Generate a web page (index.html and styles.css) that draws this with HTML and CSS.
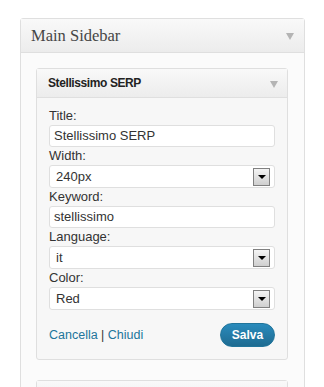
FILE: index.html
```html
<!DOCTYPE html>
<html lang="en">
<head>
    <meta charset="UTF-8">
    <title>Main Sidebar</title>
    <link rel="stylesheet" href="styles.css">
</head>
<body>
    <div class="sidebar">
        <div class="sidebar-head">
            <h3 class="sidebar-title">Main Sidebar</h3>
            <span class="toggle"></span>
        </div>
        <div class="sidebar-body">
            <div class="widget">
                <div class="widget-head">
                    <h4 class="widget-title">Stellissimo SERP</h4>
                    <span class="toggle"></span>
                </div>
                <div class="widget-body">
                    <label class="field-label">Title:</label>
                    <div class="text-input">Stellissimo SERP</div>

                    <label class="field-label">Width:</label>
                    <div class="select-input"><span class="select-value">240px</span><span class="select-btn"></span></div>

                    <label class="field-label">Keyword:</label>
                    <div class="text-input">stellissimo</div>

                    <label class="field-label">Language:</label>
                    <div class="select-input"><span class="select-value">it</span><span class="select-btn"></span></div>

                    <label class="field-label">Color:</label>
                    <div class="select-input"><span class="select-value">Red</span><span class="select-btn"></span></div>

                    <div class="widget-actions">
                        <div class="links"><a href="#">Cancella</a> | <a href="#">Chiudi</a></div>
                        <button class="save-button">Salva</button>
                    </div>
                </div>
            </div>
            <div class="widget widget-next">
                <div class="widget-head"></div>
            </div>
        </div>
    </div>
</body>
</html>
```

FILE: styles.css
```css
* {
    margin: 0;
    padding: 0;
    box-sizing: border-box;
}

body {
    background: #ffffff;
    font-family: 'Liberation Sans', Arial, sans-serif;
    font-size: 12px;
    color: #333333;
    padding: 18px 0 0 20px;
    height: 387px;
    overflow: hidden;
}

.sidebar {
    width: 285px;
    border: 1px solid #dfdfdf;
    border-radius: 3px 3px 0 0;
    background: #fbfbfb;
    min-height: 400px;
}

.sidebar-head {
    height: 34px;
    display: flex;
    align-items: center;
    justify-content: space-between;
    padding: 0 10px;
    background: linear-gradient(#f9f9f9, #ececec);
    border-bottom: 1px solid #dfdfdf;
}

.sidebar-title {
    font-family: 'Liberation Serif', Georgia, serif;
    font-weight: normal;
    font-size: 16.5px;
    color: #464646;
    padding-top: 1px;
}

.toggle {
    width: 0;
    height: 0;
    border-left: 4px solid transparent;
    border-right: 4px solid transparent;
    border-top: 7px solid #b4b4b4;
    margin-top: 2px;
}

.sidebar-body {
    padding: 15px 16px 0 15px;
}

.widget {
    border: 1px solid #dfdfdf;
    border-radius: 3px;
    background: #f7f7f7;
}

.widget-head {
    height: 29px;
    display: flex;
    align-items: center;
    justify-content: space-between;
    padding: 0 9px 0 11px;
    background: linear-gradient(#f9f9f9, #ececec);
    border-bottom: 1px solid #dfdfdf;
}

.widget-title {
    font-size: 12px;
    font-weight: bold;
    letter-spacing: -0.4px;
    color: #222222;
}

.widget-body {
    padding: 9px 12px 12px 12px;
}

.field-label {
    display: block;
    line-height: 18px;
    font-size: 13px;
    color: #333333;
}

.text-input,
.select-input {
    width: 226px;
    background: #ffffff;
    border: 1px solid #dfdfdf;
    border-radius: 3px;
    font-size: 13px;
    color: #333333;
}

.text-input {
    height: 22px;
    line-height: 20px;
    padding-left: 4px;
}

.select-input {
    height: 23px;
    display: flex;
    align-items: center;
    justify-content: space-between;
    padding: 0 2px 0 6px;
}

.select-btn {
    width: 17px;
    height: 18px;
    border: 1px solid #808080;
    background: linear-gradient(#f4f4f4, #cfcfcf);
    display: flex;
    align-items: center;
    justify-content: center;
    margin-right: 2px;
}

.select-btn::after {
    content: "";
    width: 0;
    height: 0;
    border-left: 4px solid transparent;
    border-right: 4px solid transparent;
    border-top: 4px solid #000000;
}

.widget-actions {
    display: flex;
    align-items: center;
    justify-content: space-between;
    margin-top: 13px;
    width: 226px;
}

.links {
    font-size: 12.5px;
    color: #333333;
}

.links a {
    color: #21759b;
    text-decoration: none;
}

.save-button {
    width: 55px;
    height: 24px;
    border: 1px solid #21759b;
    border-radius: 12px;
    background: linear-gradient(#2a8bbc, #1e6b91);
    color: #ffffff;
    font-family: 'Liberation Sans', Arial, sans-serif;
    font-size: 12px;
    font-weight: bold;
}

.widget-next {
    margin-top: 20px;
    height: 40px;
}
```
